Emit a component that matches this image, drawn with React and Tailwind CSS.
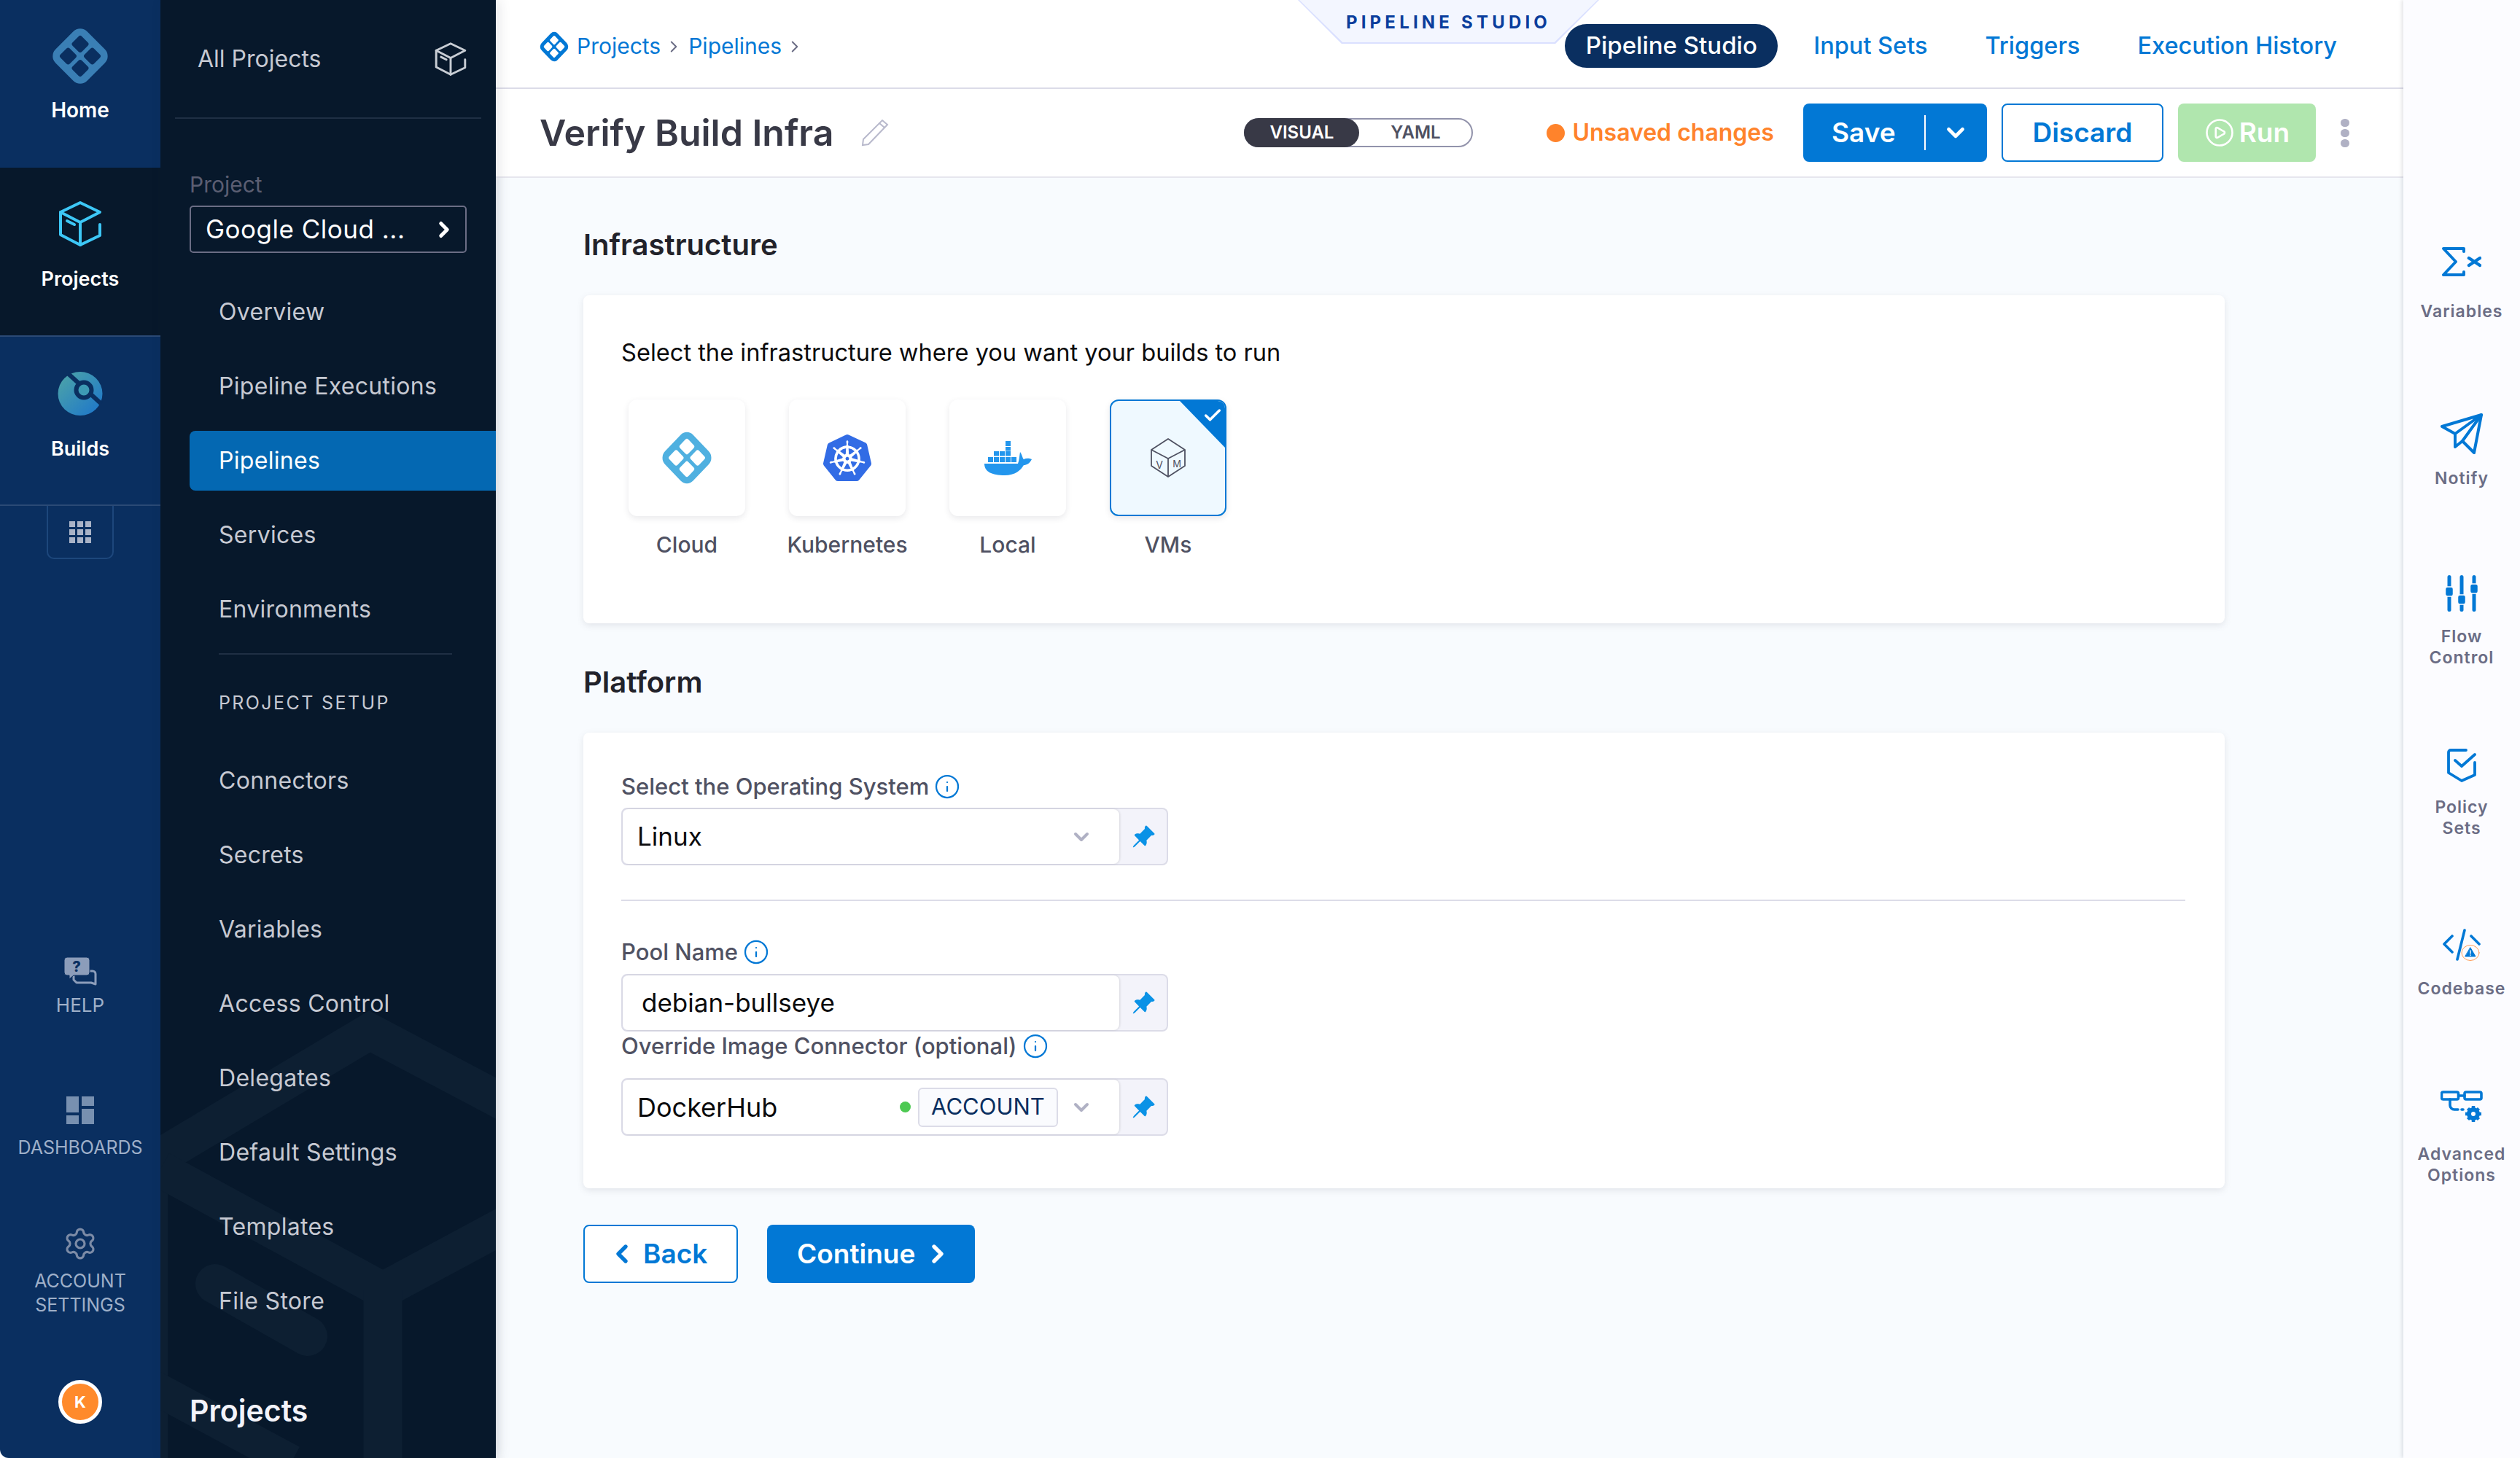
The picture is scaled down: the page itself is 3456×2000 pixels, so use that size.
import React from 'react';
import { ChevronRight, ChevronDown, ChevronLeft, Check, Info, Settings, CirclePlay } from 'lucide-react';
import { BsPinAngleFill } from 'react-icons/bs';
import { SiKubernetes } from 'react-icons/si';

// Harness style logo: rounded diamond with four diamond holes
const HarnessLogo = ({ className, color, hole }) => (
  <svg viewBox="0 0 100 100" className={className}>
    <g transform="rotate(45 50 50)">
      <rect x="16" y="16" width="68" height="68" rx="15" fill={color} />
      <rect x="27" y="27" width="20" height="20" rx="3.5" fill={hole} />
      <rect x="53" y="27" width="20" height="20" rx="3.5" fill={hole} />
      <rect x="27" y="53" width="20" height="20" rx="3.5" fill={hole} />
      <rect x="53" y="53" width="20" height="20" rx="3.5" fill={hole} />
    </g>
  </svg>
);

const CubeIcon = ({ className, color, sw = 4 }) => (
  <svg viewBox="0 0 60 64" className={className} fill="none" stroke={color} strokeWidth={sw} strokeLinejoin="round" strokeLinecap="round">
    <path d="M30 3 L57 16 L30 30 L3 16 Z" />
    <path d="M3 16 V47 L30 61 V30" />
    <path d="M30 61 L57 48 V33" />
    <path d="M12 28 L22 33" />
  </svg>
);

const BuildsIcon = () => (
  <svg viewBox="0 0 62 60" className="w-[62px] h-[60px]">
    <defs>
      <linearGradient id="buildsGrad" x1="0" y1="0" x2="1" y2="1">
        <stop offset="0" stopColor="#4fa6a6" />
        <stop offset="1" stopColor="#1b74cc" />
      </linearGradient>
    </defs>
    <ellipse cx="31" cy="30" rx="30.5" ry="30" fill="url(#buildsGrad)" />
    <path d="M15 3 L60 44" stroke="#0a2f60" strokeWidth="6" />
    <circle cx="36" cy="25" r="10.5" fill="#3d9ab4" stroke="#0a2f60" strokeWidth="6" />
  </svg>
);

const HelpIcon = () => (
  <svg viewBox="0 0 46 42" className="w-[46px] h-[42px]">
    <path d="M14 20 H40 a4 4 0 0 1 4 4 V38 L38 36 H18 L14 32 Z" fill="none" stroke="#8c9dba" strokeWidth="3" strokeLinejoin="round" />
    <path d="M5 1 H32 a4 4 0 0 1 4 4 V22 a4 4 0 0 1 -4 4 H14 L8 31 V26 H5 a4 4 0 0 1 -4 -4 V5 a4 4 0 0 1 4 -4 Z" fill="#8c9dba" stroke="#0a2f60" strokeWidth="1" />
    <text x="18" y="21" textAnchor="middle" fontSize="20" fontWeight="800" fill="#0a2f60" fontFamily="Inter">?</text>
  </svg>
);

const DashIcon = () => (
  <svg viewBox="0 0 38 38" className="w-[38px] h-[38px]" fill="#7890b0">
    <rect x="0" y="0" width="17" height="22" />
    <rect x="21" y="0" width="17" height="13" />
    <rect x="0" y="26" width="17" height="12" />
    <rect x="21" y="17" width="17" height="21" />
  </svg>
);

const VmIcon = () => (
  <svg viewBox="0 0 48 54" className="w-[48px] h-[54px]" fill="none" stroke="#4f5162" strokeWidth="1.8" strokeLinejoin="round">
    <path d="M24 1 L47 16 V38 L24 53 L1 38 V16 Z" />
    <path d="M1 16 L24 28 L47 16 M24 28 V53" />
    <text x="12" y="42" textAnchor="middle" fontSize="14" fill="#4f5162" stroke="none" fontFamily="Inter">V</text>
    <text x="36" y="40" textAnchor="middle" fontSize="13" fill="#4f5162" stroke="none" fontFamily="Inter">M</text>
  </svg>
);

const DockerIcon = () => (
  <svg viewBox="0 0 65 47" className="w-[65px] h-[47px]">
    <g fill="#2396ed">
      <rect x="29" y="0" width="7" height="7" />
      <rect x="13" y="14" width="7" height="6.5" /><rect x="21" y="14" width="7" height="6.5" /><rect x="29" y="14" width="7" height="6.5" />
      <rect x="29" y="8" width="7" height="5.5" />
      <rect x="5" y="22" width="7" height="7" /><rect x="13" y="22" width="7" height="7" /><rect x="21" y="22" width="7" height="7" /><rect x="29" y="22" width="7" height="7" /><rect x="37" y="22" width="7" height="7" />
      <path d="M0 31 H46 C48 26 48 20 49 15 C52 19 52 23 54 25 C58 23 62 24 65 25 C62 31 58 33 54 33 C50 40 42 47 28 47 C10 47 0 42 0 31 Z" />
    </g>
  </svg>
);

const PencilIcon = () => (
  <svg viewBox="0 0 38 38" className="w-[38px] h-[38px]" fill="none" stroke="#b8b9cc" strokeWidth="2">
    <path d="M29 2 L36 8 L10 35 L2 36 L3 28 Z" />
    <path d="M25 6 L32 12" />
  </svg>
);

const SigmaX = () => (
  <svg viewBox="0 0 54 40" className="w-[54px] h-[40px]" fill="none" stroke="#0278d5" strokeWidth="4" strokeLinecap="round" strokeLinejoin="round">
    <path d="M30 6 V2 H2 L19 20 L2 38 H30 V34" />
    <path d="M37 15 L52 25 M52 15 L37 25" strokeWidth="4.5" />
  </svg>
);

const NotifyIcon = () => (
  <svg viewBox="0 0 58 56" className="w-[58px] h-[56px]" fill="none" stroke="#0278d5" strokeWidth="4" strokeLinecap="round" strokeLinejoin="round">
    <path d="M56 2 L2 18 L20 28 L56 2 L46 54 L30 38 L20 46 V28" />
    <path d="M30 38 L56 2" />
  </svg>
);

const FlowIcon = () => (
  <svg viewBox="0 0 46 50" className="w-[46px] h-[50px]" fill="#0278d5">
    <rect x="3.5" y="0" width="5" height="50" rx="2.5" /><rect x="20.5" y="0" width="5" height="50" rx="2.5" /><rect x="37.5" y="0" width="5" height="50" rx="2.5" />
    <rect x="0.5" y="16" width="11" height="13" rx="3" stroke="#fcfcff" strokeWidth="1.5" />
    <rect x="17.5" y="27" width="11" height="13" rx="3" stroke="#fcfcff" strokeWidth="1.5" />
    <rect x="34.5" y="12" width="11" height="13" rx="3" stroke="#fcfcff" strokeWidth="1.5" />
  </svg>
);

const PolicyIcon = () => (
  <svg viewBox="0 0 40 46" className="w-[40px] h-[46px]" fill="none" stroke="#0278d5" strokeWidth="3.8" strokeLinecap="round" strokeLinejoin="round">
    <path d="M26 2 H5 a3 3 0 0 0 -3 3 V33 L20 44 L38 36 V19" />
    <path d="M11 16 L20 24 L38 8" />
  </svg>
);

const CodebaseIcon = () => (
  <svg viewBox="0 0 52 46" className="w-[52px] h-[46px]" fill="none" stroke="#0278d5" strokeWidth="3.6" strokeLinecap="round" strokeLinejoin="round">
    <path d="M13 10 L2 21 L13 32" />
    <path d="M30 2 L20 42" />
    <path d="M39 10 L50 21" />
    <ellipse cx="38" cy="33" rx="12" ry="10.5" fill="#fcfcff" stroke="#ff832b" strokeWidth="0.8" />
    <path d="M38 26 L45 38 H31 Z" fill="#0278d5" strokeWidth="1" />
    <path d="M38 30 V34 M38 36 V36.5" stroke="#fff" strokeWidth="1.4" />
  </svg>
);

const AdvancedIcon = () => (
  <svg viewBox="0 0 58 46" className="w-[58px] h-[46px]" fill="none" stroke="#0278d5" strokeWidth="3.6" strokeLinecap="round" strokeLinejoin="round">
    <rect x="1.5" y="2" width="23" height="10" rx="2" />
    <rect x="33" y="2" width="23" height="10" rx="2" />
    <path d="M25 7 H33" />
    <path d="M13 12 V20 a6 6 0 0 0 6 6 H24 M29 26 H31" />
    <circle cx="45" cy="32" r="6" strokeWidth="6" />
    <path d="M45 21 V24 M45 40 V43 M34 32 H37 M53 32 H56 M37.5 24.5 L39.5 26.5 M50.5 37.5 L52.5 39.5 M52.5 24.5 L50.5 26.5 M39.5 37.5 L37.5 39.5" strokeWidth="4.5" strokeLinecap="butt" />
  </svg>
);

const Watermark = () => (
  <svg viewBox="220 1300 460 700" className="absolute left-0 bottom-0 w-[460px] h-[700px] pointer-events-none" fill="none" stroke="#0d1f32">
    <path d="M205 1595 L507 1415 L700 1517" strokeWidth="50" />
    <path d="M205 1590 V2000" strokeWidth="50" />
    <path d="M220 1604 L525 1770 L700 1676" strokeWidth="50" />
    <path d="M525 1770 V2000" strokeWidth="53" />
    <path d="M295 1761 L422 1833" strokeWidth="54" strokeLinecap="round" />
    <path d="M205 1900 L400 2005" strokeWidth="46" />
  </svg>
);

const navTop = ['Overview', 'Pipeline Executions', 'Pipelines', 'Services', 'Environments'];
const navSetup = ['Connectors', 'Secrets', 'Variables', 'Access Control', 'Delegates', 'Default Settings', 'Templates', 'File Store'];

const NavItem = ({ label }) => {
  const active = label === 'Pipelines';
  return (
    <div className="h-[102px] flex items-center pl-[40px]">
      <div className={`h-[82px] w-full flex items-center pl-[40px] rounded-l-[8px] text-[32px] tracking-[0.3px] ${active ? 'bg-[#0468b2] text-white' : 'text-[#c6c9d2]'}`}>
        {label}
      </div>
    </div>
  );
};

const PinBox = ({ children }) => (
  <div className="w-[750px] h-[79px] flex rounded-[8px] border-2 border-[#dcdce8] bg-[#f3f3fa]">
    <div className="flex-1 flex items-center bg-white rounded-[8px] shadow-[1px_0_3px_rgba(0,0,0,0.12)]">{children}</div>
    <div className="w-[65px] flex items-center justify-center"><BsPinAngleFill className="w-[34px] h-[34px] text-[#0a92e6]" /></div>
  </div>
);

const FieldLabel = ({ children, className }) => (
  <div className={`h-[40px] flex items-center gap-[7px] text-[31px] font-medium text-[#4f5162] ${className}`}>
    {children}
    <Info className="w-[36px] h-[36px] text-[#0278d5]" strokeWidth={1.5} />
  </div>
);

const Tile = ({ label, selected, children }) => (
  <div className="w-[160px] flex flex-col items-center">
    <div className={`relative w-[160px] h-[160px] rounded-[12px] overflow-hidden flex items-center justify-center shadow-[0_3px_8px_rgba(40,41,61,0.1)] ${selected ? 'bg-[#eff9ff] border-2 border-[#0278d5]' : 'bg-white'}`}>
      {children}
      {selected && (
        <>
          <div className="absolute top-0 right-0 w-[62px] h-[64px] bg-[#0278d5] [clip-path:polygon(0_0,100%_0,100%_100%)]" />
          <Check className="absolute top-[6px] right-[3px] w-[28px] h-[28px] text-white" strokeWidth={3} />
        </>
      )}
    </div>
    <div className="mt-[22px] h-[34px] flex items-center text-[30px] font-medium text-[#4f5162] whitespace-nowrap">{label}</div>
  </div>
);

const sideItems = [
  { top: 'mt-[329px]', gap: 'mt-[24px]', icon: <SigmaX />, lines: ['Variables'] },
  { top: 'mt-[123px]', gap: 'mt-[17px]', icon: <NotifyIcon />, lines: ['Notify'] },
  { top: 'mt-[113px]', gap: 'mt-[15px]', icon: <FlowIcon />, lines: ['Flow', 'Control'] },
  { top: 'mt-[103px]', gap: 'mt-[13px]', icon: <PolicyIcon />, lines: ['Policy', 'Sets'] },
  { top: 'mt-[116px]', gap: 'mt-[15px]', icon: <CodebaseIcon />, lines: ['Codebase'] },
  { top: 'mt-[118px]', gap: 'mt-[20px]', icon: <AdvancedIcon />, lines: ['Advanced', 'Options'] },
];

export default function App() {
  return (
    <div className="w-[3456px] h-[2000px] flex overflow-hidden font-[Inter,sans-serif] bg-white">
      {/* Module rail */}
      <div className="w-[220px] h-full flex flex-col items-center bg-[#0a2f60] rounded-bl-[12px] shrink-0">
        <div className="w-full h-[230px] flex flex-col items-center pt-[40px]">
          <HarnessLogo className="w-[90px] h-[90px] -m-[8px]" color="#3a7fb5" hole="#0a2f60" />
          <div className="mt-[19px] h-[36px] text-[28px] leading-[36px] font-semibold text-white">Home</div>
        </div>
        <div className="w-full h-[232px] flex flex-col items-center pt-[45px] bg-[#07182b] border-b-2 border-[#2b4a75]">
          <CubeIcon className="w-[60px] h-[64px]" color="#3dc7f6" />
          <div className="mt-[26px] h-[36px] text-[27px] leading-[36px] font-semibold text-white">Projects</div>
        </div>
        <div className="w-full h-[232px] flex flex-col items-center pt-[48px] border-b-2 border-[#2b4a75]">
          <BuildsIcon />
          <div className="mt-[28px] h-[36px] text-[27px] leading-[36px] font-semibold text-white">Builds</div>
        </div>
        <div className="w-[92px] h-[73px] flex items-center justify-center border-2 border-t-0 border-[#1d477c] rounded-b-[10px]">
          <div className="grid grid-cols-3 gap-[3px]">
            {Array.from({ length: 9 }).map((_, i) => (
              <div key={i} className="w-[8px] h-[8px] bg-[#a9b3c7]" />
            ))}
          </div>
        </div>
        <div className="mt-[545px]"><HelpIcon /></div>
        <div className="mt-[8px] text-[26px] leading-[34px] text-[#9fb0c9]">HELP</div>
        <div className="mt-[108px]"><DashIcon /></div>
        <div className="mt-[15px] text-[25px] leading-[34px] text-[#9fb0c9]">DASHBOARDS</div>
        <Settings className="mt-[91px] w-[48px] h-[48px] text-[#7c8ba6]" strokeWidth={1.6} />
        <div className="mt-[11px] text-[25px] leading-[33px] text-[#9fb0c9] text-center">ACCOUNT<br />SETTINGS</div>
        <div className="mt-[86px] w-[60px] h-[60px] rounded-full bg-[#ff8a2b] border-[5px] border-white flex items-center justify-center text-[22px] font-bold text-white">K</div>
      </div>

      {/* Project nav */}
      <div className="relative w-[460px] h-full bg-[#07182b] shrink-0 flex flex-col z-10 shadow-[4px_0_16px_rgba(40,41,61,0.12)]">
        <Watermark />
        <div className="relative">
          <div className="h-[163px] mx-[20px] border-b-2 border-[#1f2f44] flex items-center justify-between pl-[31px] pr-[20px]">
            <span className="text-[32px] text-[#c6c9d2]">All Projects</span>
            <CubeIcon className="w-[44px] h-[48px]" color="#c8cdd4" sw={4} />
          </div>
          <div className="mt-[70px] ml-[40px] h-[40px] flex items-center text-[30px] text-[#5b5e72]">Project</div>
          <div className="mt-[9px] ml-[40px] w-[380px] h-[65px] rounded-[5px] border-2 border-[#6b6d85] flex items-center justify-between pl-[20px] pr-[12px]">
            <span className="text-[35px] text-white tracking-[0.5px] whitespace-nowrap">Google Cloud ...</span>
            <ChevronRight className="w-[34px] h-[34px] text-white" strokeWidth={3.5} />
          </div>
          <div className="mt-[30px]">
            {navTop.map((l) => <NavItem key={l} label={l} />)}
          </div>
          <div className="mt-[9px] ml-[80px] w-[320px] border-t-2 border-[#1f2f44]" />
          <div className="mt-[49px] ml-[80px] h-[36px] flex items-center text-[25px] tracking-[2.4px] text-[#c6c9d2]">PROJECT SETUP</div>
          <div className="mt-[37px]">
            {navSetup.map((l) => <NavItem key={l} label={l} />)}
          </div>
          <div className="mt-[70px] ml-[40px] h-[60px] flex items-center text-[41px] font-semibold text-[#f3f3fa]">Projects</div>
        </div>
      </div>

      {/* Main */}
      <div className="w-[2616px] h-full flex flex-col shrink-0 bg-[#f8fbfe]">
        <div className="relative h-[122px] bg-white border-b-2 border-[#dcdce8] flex items-center justify-end pr-[91px] pt-[6px]">
          <div className="absolute left-[61px] top-[41px] flex items-center">
            <HarnessLogo className="w-[46px] h-[46px] -m-[4px] scale-y-105" color="#0278d5" hole="#ffffff" />
            <span className="ml-[12px] text-[30px] text-[#0278d5]">Projects</span>
            <ChevronRight className="ml-[5px] w-[26px] h-[26px] text-[#6b6d85]" strokeWidth={1.8} />
            <span className="ml-[7px] text-[30px] text-[#0278d5]">Pipelines</span>
            <ChevronRight className="ml-[5px] w-[26px] h-[26px] text-[#6b6d85]" strokeWidth={1.8} />
          </div>
          <div className="absolute left-[1100px] top-0 w-[413px] h-[60px] bg-[#dae0ff] [clip-path:polygon(0_0,100%_0,85.5%_100%,14.5%_100%)]">
            <div className="h-[58px] w-[409px] ml-[2px] bg-[#f3f6ff] [clip-path:polygon(0_0,100%_0,85.5%_100%,14.5%_100%)] flex items-center justify-center text-[24px] font-bold tracking-[5.2px] text-[#0a3d9c] pt-[4px]">PIPELINE STUDIO</div>
          </div>
          <div className="h-[60px] w-[292px] rounded-full bg-[#0a2f60] flex items-center justify-center text-[33px] font-medium text-white mr-[49px] z-10">Pipeline Studio</div>
          <span className="text-[32.5px] font-medium text-[#0278d5]">Input Sets</span>
          <span className="ml-[79px] text-[32.5px] font-medium text-[#0278d5]">Triggers</span>
          <span className="ml-[79px] text-[32.5px] font-medium text-[#0278d5]">Execution History</span>
        </div>
        <div className="h-[122px] bg-white border-b-2 border-[#e6e6ee] flex items-center pl-[60px]">
          <span className="text-[50px] font-semibold text-[#383946]">Verify Build Infra</span>
          <span className="ml-[38px]"><PencilIcon /></span>
          <div className="ml-[487px] relative w-[314px] h-[40px] rounded-full border-2 border-[#9293ab] flex items-center">
            <div className="absolute -left-[2px] -top-[2px] w-[158px] h-[40px] rounded-full bg-[#383946] flex items-center justify-center text-[24px] font-semibold text-white">VISUAL</div>
            <div className="ml-[156px] flex-1 text-center text-[24px] font-semibold text-[#4f5162]">YAML</div>
          </div>
          <span className="ml-[101px] w-[25px] h-[25px] rounded-full bg-[#ff832b]" />
          <span className="ml-[10px] text-[32px] font-semibold text-[#ff832b]">Unsaved changes</span>
          <div className="ml-[40px] w-[252px] h-[80px] rounded-[8px] bg-[#0278d5] flex items-center text-white">
            <span className="w-[166px] text-center text-[37px] font-semibold">Save</span>
            <span className="w-[2px] h-[48px] bg-white" />
            <ChevronDown className="ml-[22px] w-[38px] h-[38px]" strokeWidth={3} />
          </div>
          <div className="ml-[20px] w-[222px] h-[80px] rounded-[8px] bg-white border-2 border-[#0278d5] flex items-center justify-center text-[37px] font-semibold text-[#0278d5]">Discard</div>
          <div className="ml-[20px] w-[189px] h-[80px] rounded-[8px] bg-[#b0e6ae] flex items-center justify-center gap-[6px] text-[37px] font-semibold text-white">
            <CirclePlay className="w-[42px] h-[42px]" strokeWidth={1.5} />Run
          </div>
          <div className="ml-[34px] flex flex-col gap-[3px]">
            <span className="w-[12px] h-[11px] rounded-full bg-[#b0b1c4]" />
            <span className="w-[12px] h-[11px] rounded-full bg-[#b0b1c4]" />
            <span className="w-[12px] h-[11px] rounded-full bg-[#b0b1c4]" />
          </div>
        </div>

        {/* Form */}
        <div className="flex-1 pl-[120px] pt-[62px] shadow-[inset_12px_0_12px_-10px_rgba(40,41,61,0.08)]">
          <div className="h-[60px] flex items-center text-[40px] font-semibold text-[#22222a]">Infrastructure</div>
          <div className="mt-[39px] w-[2251px] h-[450px] bg-white rounded-[8px] shadow-[0_3px_10px_rgba(96,97,112,0.14)] pl-[52px] pt-[53px]">
            <div className="h-[50px] flex items-center text-[32.6px] text-[#0b0b0d]">Select the infrastructure where you want your builds to run</div>
            <div className="mt-[40px] ml-[10px] flex gap-[60px]">
              <Tile label="Cloud"><HarnessLogo className="w-[80px] h-[80px] scale-y-105" color="#4fb0e0" hole="#ffffff" /></Tile>
              <Tile label="Kubernetes"><SiKubernetes className="w-[66px] h-[66px] text-[#326ce5]" /></Tile>
              <Tile label="Local"><DockerIcon /></Tile>
              <Tile label="VMs" selected><VmIcon /></Tile>
            </div>
          </div>

          <div className="mt-[51px] h-[60px] flex items-center text-[40px] font-semibold text-[#22222a]">Platform</div>
          <div className="mt-[39px] w-[2251px] h-[625px] bg-white rounded-[8px] shadow-[0_3px_10px_rgba(96,97,112,0.14)] pl-[52px] pt-[54px]">
            <FieldLabel>Select the Operating System</FieldLabel>
            <div className="mt-[9px]">
              <PinBox>
                <span className="ml-[20px] flex-1 text-[35px] text-[#0b0b0d]">Linux</span>
                <ChevronDown className="mr-[36px] w-[32px] h-[32px] text-[#b0b1c4]" strokeWidth={3} />
              </PinBox>
            </div>
            <div className="mt-[47px] w-[2145px] border-t-2 border-[#dcdce8]" />
            <FieldLabel className="mt-[50px]">Pool Name</FieldLabel>
            <div className="mt-[10px]">
              <PinBox>
                <span className="ml-[26px] text-[35px] text-[#0b0b0d]">debian-bullseye</span>
              </PinBox>
            </div>
            <FieldLabel>Override Image Connector (optional)</FieldLabel>
            <div className="mt-[24px]">
              <PinBox>
                <span className="ml-[20px] flex-1 text-[36px] text-[#0b0b0d]">DockerHub</span>
                <span className="w-[15px] h-[15px] rounded-full bg-[#4dc952]" />
                <span className="ml-[10px] w-[192px] h-[54px] rounded-[6px] border-2 border-[#dcdce8] bg-[#fafbfe] flex items-center justify-center text-[31px] text-[#0a2f60]">ACCOUNT</span>
                <ChevronDown className="ml-[16px] mr-[36px] w-[32px] h-[32px] text-[#b0b1c4]" strokeWidth={3} />
              </PinBox>
            </div>
          </div>

          <div className="mt-[50px] flex gap-[40px]">
            <div className="w-[212px] h-[80px] rounded-[8px] bg-white border-2 border-[#0278d5] flex items-center pl-[31px] gap-[9px] text-[37px] font-semibold text-[#0278d5]">
              <ChevronLeft className="w-[40px] h-[40px]" strokeWidth={3.2} />Back
            </div>
            <div className="w-[285px] h-[80px] rounded-[8px] bg-[#0278d5] flex items-center pl-[41px] gap-[11px] text-[37px] font-semibold text-white">
              Continue<ChevronRight className="w-[40px] h-[40px]" strokeWidth={3.2} />
            </div>
          </div>
        </div>
      </div>

      {/* Right rail */}
      <div className="w-[160px] h-full shrink-0 bg-[#fcfcff] flex flex-col items-center z-10 shadow-[-2px_0_5px_rgba(40,41,61,0.14)]">
        {sideItems.map((item) => (
          <div key={item.lines[0]} className={`${item.top} w-full flex flex-col items-center`}>
            <div className="h-[60px] flex items-center justify-center">{item.icon}</div>
            <div className={`${item.gap} text-[23px] leading-[29px] font-semibold tracking-[1px] text-[#6b6d85] text-center`}>
              {item.lines.map((l) => <div key={l}>{l}</div>)}
            </div>
          </div>
        ))}
      </div>
    </div>
  );
}
